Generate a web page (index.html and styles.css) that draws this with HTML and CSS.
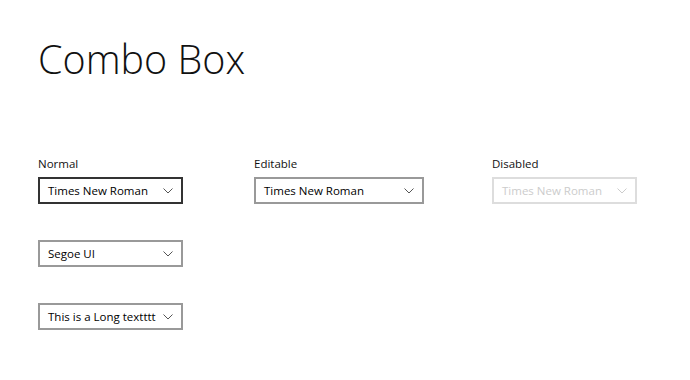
FILE: index.html
```html
<!DOCTYPE html>
<html lang="en">
<head>
    <meta charset="UTF-8">
    <title>Combo Box</title>
    <link rel="stylesheet" href="styles.css">
</head>
<body>
    <div class="page">
        <h1 class="title">Combo Box</h1>

        <div class="grid">
            <!-- Normal column -->
            <div class="col col-normal">
                <div class="label">Normal</div>
                <div class="combo focused">
                    <span class="combo-text">Times New Roman</span>
                    <svg class="chevron" viewBox="0 0 10 6"><path d="M0.5 0.5 L5 5 L9.5 0.5"/></svg>
                </div>
                <div class="combo">
                    <span class="combo-text">Segoe UI</span>
                    <svg class="chevron" viewBox="0 0 10 6"><path d="M0.5 0.5 L5 5 L9.5 0.5"/></svg>
                </div>
                <div class="combo">
                    <span class="combo-text">This is a Long textttt</span>
                    <svg class="chevron" viewBox="0 0 10 6"><path d="M0.5 0.5 L5 5 L9.5 0.5"/></svg>
                </div>
            </div>

            <!-- Editable column -->
            <div class="col col-editable">
                <div class="label">Editable</div>
                <div class="combo wide">
                    <span class="combo-text">Times New Roman</span>
                    <svg class="chevron" viewBox="0 0 10 6"><path d="M0.5 0.5 L5 5 L9.5 0.5"/></svg>
                </div>
            </div>

            <!-- Disabled column -->
            <div class="col col-disabled">
                <div class="label">Disabled</div>
                <div class="combo disabled">
                    <span class="combo-text">Times New Roman</span>
                    <svg class="chevron" viewBox="0 0 10 6"><path d="M0.5 0.5 L5 5 L9.5 0.5"/></svg>
                </div>
            </div>
        </div>
    </div>
</body>
</html>
```

FILE: styles.css
```css
body {
    margin: 0;
    padding: 0;
    background-color: #fff;
    color: #000;
    font-family: 'Segoe UI', 'Open Sans', sans-serif;
}

.page {
    padding: 31px 38px 0 38px;
}

.title {
    margin: 0;
    font-weight: 300;
    font-size: 39.5px;
    line-height: 56px;
    color: #111;
}

.grid {
    display: grid;
    grid-template-columns: 216px 238px auto;
    margin-top: 69px;
}

.col {
    display: flex;
    flex-direction: column;
    gap: 36px;
}

.label {
    font-size: 11.5px;
    line-height: 16px;
    color: #111;
    margin-bottom: -31px;
}

.combo {
    width: 145px;
    height: 27px;
    box-sizing: border-box;
    border: 2px solid #999;
    display: flex;
    align-items: center;
    justify-content: space-between;
    padding: 0 8px 0 8px;
}

.combo.wide {
    width: 170px;
}

.combo.focused {
    border-color: #333;
}

.combo-text {
    font-size: 11.5px;
    color: #000;
    white-space: nowrap;
}

.chevron {
    width: 10px;
    height: 6px;
    flex-shrink: 0;
    margin-left: 4px;
}

.chevron path {
    fill: none;
    stroke: #555;
    stroke-width: 1;
}

.combo.disabled {
    border-color: #ddd;
}

.combo.disabled .combo-text {
    color: #ccc;
}

.combo.disabled .chevron path {
    stroke: #ccc;
}
```
